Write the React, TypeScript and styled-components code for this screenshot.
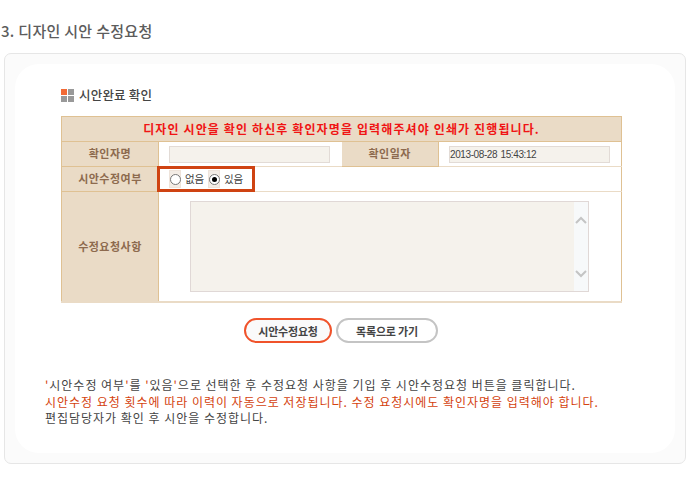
import React from "react";
import styled, { createGlobalStyle } from "styled-components";

const Global = createGlobalStyle`
  html, body { margin: 0; padding: 0; background: #fff; }
  body { font-family: "Noto Sans CJK KR", "Liberation Sans", sans-serif; }
`;

const Page = styled.div`
  width: 686px;
  height: 494px;
  overflow: hidden;
  padding-top: 21px;
  box-sizing: border-box;
`;

const PageTitle = styled.h2`
  margin: 0 0 11px 1px;
  height: 21px;
  font-size: 15px;
  line-height: 19px;
  font-weight: 500;
  color: #5c5c5c;
  letter-spacing: 0.3px;
`;

const Panel = styled.div`
  margin-left: 4px;
  width: 682px;
  height: 411px;
  box-sizing: border-box;
  border: 1px solid #e6e6e6;
  border-radius: 7px;
  background: #fbfbfb;
  padding: 10px;
`;

const PanelInner = styled.div`
  height: 100%;
  box-sizing: border-box;
  background: #fff;
  border-radius: 24px;
  padding: 21px 0 0 46px;
`;

const SectionHead = styled.div`
  display: flex;
  align-items: center;
  gap: 5px;
  height: 20px;
  margin-bottom: 11px;
`;

const SectionTitle = styled.h3`
  margin: 0;
  font-size: 12.5px;
  line-height: 18px;
  font-weight: 500;
  color: #444;
  letter-spacing: 0.2px;
`;

const FormTable = styled.table`
  width: 560px;
  height: 187px;
  table-layout: fixed;
  border-collapse: collapse;
  border-left: 1px solid #dfc193;
  border-right: 1px solid #dfc193;
  border-top: 1px solid #dfc193;
  border-bottom: 2px solid #eadbc6;
  font-size: 11px;
`;

const Col = styled.col<{ $w: number }>`
  width: ${(p) => p.$w}px;
`;

const Notice = styled.td`
  height: 22px;
  padding: 0 0 2px;
  background: #eadbc6;
  border-bottom: 1px solid #dfc193;
  color: #f01414;
  font-size: 12px;
  font-weight: 700;
  text-align: center;
  letter-spacing: 1.12px;
`;

const Label = styled.th<{ $h?: number }>`
  ${(p) => (p.$h ? `height: ${p.$h}px;` : "")}
  padding: 0 0 2px;
  background: #eadbc6;
  border-right: 1px solid #dfc193;
  border-bottom: 1px solid #dfc193;
  color: #8d6a4e;
  font-size: 11px;
  font-weight: 700;
  text-align: center;
  letter-spacing: 0.5px;
`;

const Value = styled.td<{ $pad?: number }>`
  position: relative;
  padding: 0 0 0 ${(p) => p.$pad ?? 10}px;
  background: #fff;
  border-bottom: 1px solid #eadbc6;
  color: #333;
`;

const ReadOnly = styled.div<{ $w: number }>`
  width: ${(p) => p.$w}px;
  height: 17px;
  box-sizing: border-box;
  background: #f5f2ec;
  border: 1px solid #e2dbd6;
  font-family: "Liberation Sans", sans-serif;
  font-size: 10px;
  line-height: 15px;
  color: #444;
  letter-spacing: -0.4px;
  word-spacing: 1px;
`;

const RadioRow = styled.div`
  display: flex;
  align-items: center;
  height: 24px;
`;

const RadioBox = styled.span`
  width: 12px;
  height: 18px;
  flex: none;
  display: flex;
  align-items: center;
  justify-content: center;
  background: #f3ece5;
  border: 1px solid #eee3da;
  box-sizing: border-box;
`;

const RadioDot = styled.span<{ $on?: boolean }>`
  width: 11px;
  height: 11px;
  flex: none;
  border-radius: 50%;
  box-sizing: border-box;
  background: #fff;
  border: 1px solid #777;
  display: flex;
  align-items: center;
  justify-content: center;
  &::after {
    content: "";
    width: 5px;
    height: 5px;
    border-radius: 50%;
    background: ${(p) => (p.$on ? "#000" : "transparent")};
  }
`;

const RadioText = styled.span<{ $w: number }>`
  width: ${(p) => p.$w}px;
  box-sizing: border-box;
  padding-left: 4px;
  font-size: 10.5px;
  line-height: 14px;
  color: #444;
  letter-spacing: -0.2px;
`;

const Highlight = styled.div`
  position: absolute;
  left: -2px;
  top: -1px;
  width: 98px;
  height: 26px;
  box-sizing: border-box;
  border: 3px solid #cf4312;
  pointer-events: none;
`;

const RequestBox = styled.div`
  width: 399px;
  height: 91px;
  box-sizing: border-box;
  display: flex;
  justify-content: flex-end;
  background: #f5f2ec;
  border: 1px solid #e0d8d6;
`;

const ScrollTrack = styled.div`
  width: 14px;
  background: #f7f9fa;
  display: flex;
  flex-direction: column;
  align-items: center;
  justify-content: space-between;
  padding: 14px 0 13px;
`;

const Buttons = styled.div`
  display: flex;
  justify-content: center;
  gap: 4px;
  width: 560px;
  margin-top: 15px;
`;

const PillButton = styled.button<{ $primary?: boolean }>`
  height: 25px;
  width: ${(p) => (p.$primary ? 88 : 102)}px;
  padding: 0;
  border-radius: 13px;
  background: ${(p) => (p.$primary ? "#fafafa" : "#fff")};
  border: 2px solid ${(p) => (p.$primary ? "#f0532b" : "#c4c4c4")};
  font-family: inherit;
  font-size: 11px;
  line-height: 20px;
  font-weight: 700;
  color: #444;
  letter-spacing: -0.2px;
`;

const Notes = styled.div`
  margin: 34px 0 0 -16px;
  font-size: 12px;
  line-height: 16.5px;
  color: #444;
  letter-spacing: 0.98px;
  white-space: nowrap;
`;

const NoteLine = styled.p<{ $accent?: boolean }>`
  margin: 0;
  color: ${(p) => (p.$accent ? "#d4420e" : "#444")};
`;

const Quote = styled.span`
  color: #d4420e;
`;

const SquaresIcon = () => (
  <svg width="13" height="13" viewBox="0 0 13 13">
    <rect x="0" y="0" width="6" height="6" fill="#f26a35" />
    <rect x="7" y="0" width="6" height="6" fill="#999" />
    <rect x="0" y="7" width="6" height="6" fill="#999" />
    <rect x="7" y="7" width="6" height="6" fill="#999" />
  </svg>
);

const Chevron = ({ up }: { up?: boolean }) => (
  <svg width="12" height="8" viewBox="0 0 12 8">
    <path d={up ? "M1 7 L6 2 L11 7" : "M1 1 L6 6 L11 1"} fill="none" stroke="#c4c4c4" strokeWidth="2" />
  </svg>
);

export default function App() {
  return (
    <Page>
      <Global />
      <PageTitle>3. 디자인 시안 수정요청</PageTitle>
      <Panel>
        <PanelInner>
          <SectionHead>
            <SquaresIcon />
            <SectionTitle>시안완료 확인</SectionTitle>
          </SectionHead>
          <FormTable>
            <colgroup>
              <Col $w={97} />
              <Col $w={183} />
              <Col $w={97} />
              <Col $w={183} />
            </colgroup>
            <tbody>
              <tr>
                <Notice colSpan={4}>디자인 시안을 확인 하신후 확인자명을 입력해주셔야 인쇄가 진행됩니다.</Notice>
              </tr>
              <tr>
                <Label $h={22}>확인자명</Label>
                <Value>
                  <ReadOnly $w={161} />
                </Value>
                <Label>확인일자</Label>
                <Value>
                  <ReadOnly $w={161}>2013-08-28 15:43:12</ReadOnly>
                </Value>
              </tr>
              <tr>
                <Label $h={22}>시안수정여부</Label>
                <Value colSpan={3}>
                  <RadioRow>
                    <RadioBox>
                      <RadioDot />
                    </RadioBox>
                    <RadioText $w={27}>없음</RadioText>
                    <RadioBox>
                      <RadioDot $on />
                    </RadioBox>
                    <RadioText $w={36}>있음</RadioText>
                  </RadioRow>
                  <Highlight />
                </Value>
              </tr>
              <tr>
                <Label>수정요청사항</Label>
                <Value colSpan={3} $pad={31}>
                  <RequestBox>
                    <ScrollTrack>
                      <Chevron up />
                      <Chevron />
                    </ScrollTrack>
                  </RequestBox>
                </Value>
              </tr>
            </tbody>
          </FormTable>
          <Buttons>
            <PillButton $primary>시안수정요청</PillButton>
            <PillButton>목록으로 가기</PillButton>
          </Buttons>
          <Notes>
            <NoteLine>
              <Quote>'</Quote>시안수정 여부<Quote>'</Quote>를 <Quote>'</Quote>있음<Quote>'</Quote>으로 선택한 후 수정요청 사항을 기입 후 시안수정요청 버튼을 클릭합니다.
            </NoteLine>
            <NoteLine $accent>시안수정 요청 횟수에 따라 이력이 자동으로 저장됩니다. 수정 요청시에도 확인자명을 입력해야 합니다.</NoteLine>
            <NoteLine>편집담당자가 확인 후 시안을 수정합니다.</NoteLine>
          </Notes>
        </PanelInner>
      </Panel>
    </Page>
  );
}
